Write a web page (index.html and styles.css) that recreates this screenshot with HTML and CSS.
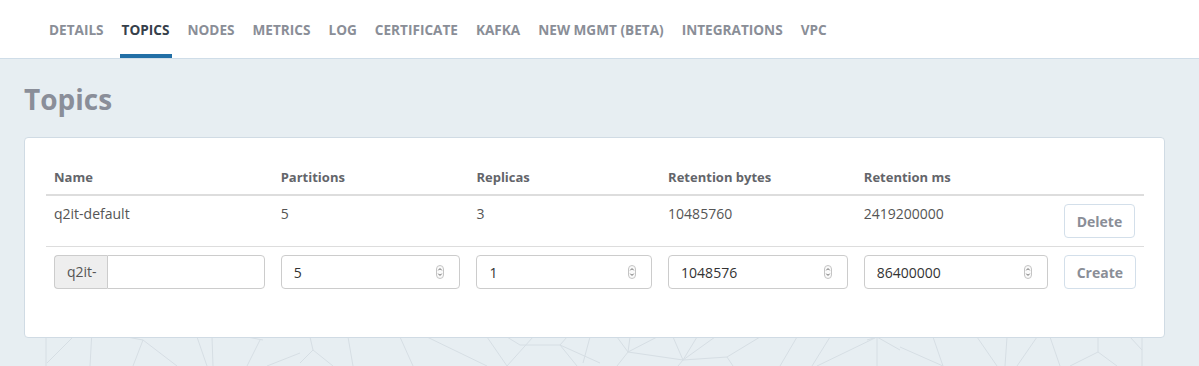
FILE: index.html
```html
<!DOCTYPE html>
<html lang="en">
<head>
    <meta charset="UTF-8">
    <meta name="viewport" content="width=device-width, initial-scale=1.0">
    <title>Topics</title>
    <link rel="stylesheet" href="styles.css">
</head>
<body>

    <!-- Tabs -->
    <nav class="tabs">
        <a href="#">DETAILS</a>
        <a href="#" class="active">TOPICS</a>
        <a href="#">NODES</a>
        <a href="#">METRICS</a>
        <a href="#">LOG</a>
        <a href="#">CERTIFICATE</a>
        <a href="#">KAFKA</a>
        <a href="#">NEW MGMT (BETA)</a>
        <a href="#">INTEGRATIONS</a>
        <a href="#">VPC</a>
    </nav>

    <div class="main">
        <!-- background mesh -->
        <svg class="mesh" width="1199" height="307" viewBox="0 59 1199 307" fill="none" stroke="#d6dee4" stroke-width="1">
            <line x1="46" y1="330" x2="46" y2="366"/>
            <line x1="47" y1="363" x2="73" y2="337"/>
            <line x1="92" y1="330" x2="90" y2="366"/>
            <line x1="143" y1="340" x2="133" y2="366"/>
            <line x1="143" y1="340" x2="177" y2="366"/>
            <line x1="127" y1="337" x2="143" y2="340"/>
            <line x1="197" y1="337" x2="207" y2="366"/>
            <line x1="212" y1="337" x2="213" y2="366"/>
            <line x1="260" y1="340" x2="247" y2="366"/>
            <line x1="247" y1="337" x2="263" y2="340"/>
            <line x1="300" y1="353" x2="267" y2="366"/>
            <line x1="310" y1="337" x2="313" y2="350"/>
            <line x1="313" y1="350" x2="300" y2="363"/>
            <line x1="313" y1="350" x2="333" y2="366"/>
            <line x1="348" y1="337" x2="353" y2="366"/>
            <line x1="400" y1="337" x2="413" y2="366"/>
            <line x1="427" y1="337" x2="487" y2="366"/>
            <line x1="487" y1="337" x2="507" y2="366"/>
            <line x1="533" y1="337" x2="507" y2="366"/>
            <line x1="507" y1="337" x2="520" y2="345"/>
            <line x1="520" y1="345" x2="560" y2="345"/>
            <line x1="560" y1="345" x2="567" y2="337"/>
            <line x1="560" y1="345" x2="600" y2="363"/>
            <line x1="560" y1="345" x2="577" y2="366"/>
            <line x1="590" y1="337" x2="583" y2="363"/>
            <line x1="617" y1="337" x2="628" y2="352"/>
            <line x1="630" y1="337" x2="628" y2="352"/>
            <line x1="628" y1="352" x2="683" y2="360"/>
            <line x1="628" y1="352" x2="657" y2="337"/>
            <line x1="628" y1="352" x2="617" y2="366"/>
            <line x1="673" y1="337" x2="683" y2="360"/>
            <line x1="697" y1="337" x2="683" y2="360"/>
            <line x1="683" y1="360" x2="715" y2="337"/>
            <line x1="683" y1="360" x2="727" y2="357"/>
            <line x1="727" y1="357" x2="760" y2="337"/>
            <line x1="727" y1="357" x2="733" y2="366"/>
            <line x1="683" y1="360" x2="678" y2="366"/>
            <line x1="797" y1="337" x2="780" y2="366"/>
            <line x1="830" y1="337" x2="812" y2="366"/>
            <line x1="867" y1="340" x2="877" y2="337"/>
            <line x1="877" y1="337" x2="877" y2="366"/>
            <line x1="877" y1="337" x2="900" y2="350"/>
            <line x1="877" y1="337" x2="817" y2="366"/>
            <line x1="900" y1="347" x2="943" y2="366"/>
            <line x1="933" y1="337" x2="943" y2="366"/>
            <line x1="977" y1="337" x2="997" y2="366"/>
            <line x1="1007" y1="337" x2="1005" y2="366"/>
            <line x1="1037" y1="337" x2="1017" y2="366"/>
            <line x1="1050" y1="337" x2="1060" y2="366"/>
            <line x1="1098" y1="337" x2="1098" y2="352"/>
            <line x1="1098" y1="352" x2="1070" y2="366"/>
            <line x1="1098" y1="352" x2="1117" y2="366"/>
            <line x1="1130" y1="337" x2="1142" y2="350"/>
            <line x1="1142" y1="330" x2="1142" y2="366"/>
        </svg>

        <h1>Topics</h1>

        <div class="card">
            <table class="topics">
                <thead>
                    <tr>
                        <th class="col-name">Name</th>
                        <th class="col-part">Partitions</th>
                        <th class="col-rep">Replicas</th>
                        <th class="col-bytes">Retention bytes</th>
                        <th class="col-ms">Retention ms</th>
                        <th></th>
                    </tr>
                </thead>
                <tbody>
                    <tr>
                        <td>q2it-default</td>
                        <td>5</td>
                        <td>3</td>
                        <td>10485760</td>
                        <td>2419200000</td>
                        <td><button class="btn">Delete</button></td>
                    </tr>
                    <tr>
                        <td>
                            <div class="input-group">
                                <span class="addon">q2it-</span>
                                <input type="text" class="field">
                            </div>
                        </td>
                        <td>
                            <div class="num">
                                <input type="number" class="field" value="5">
                                <svg class="spin" width="8" height="14" viewBox="0 0 8 14"><rect x="0.5" y="0.5" width="7" height="13" rx="3.5" fill="#fafafa" stroke="#c4c4c4"/><path d="M2.3 5.3 4 3.6 5.7 5.3M2.3 8.7 4 10.4 5.7 8.7" fill="none" stroke="#666" stroke-width="1"/></svg>
                            </div>
                        </td>
                        <td>
                            <div class="num">
                                <input type="number" class="field" value="1">
                                <svg class="spin" width="8" height="14" viewBox="0 0 8 14"><rect x="0.5" y="0.5" width="7" height="13" rx="3.5" fill="#fafafa" stroke="#c4c4c4"/><path d="M2.3 5.3 4 3.6 5.7 5.3M2.3 8.7 4 10.4 5.7 8.7" fill="none" stroke="#666" stroke-width="1"/></svg>
                            </div>
                        </td>
                        <td>
                            <div class="num">
                                <input type="number" class="field" value="1048576">
                                <svg class="spin" width="8" height="14" viewBox="0 0 8 14"><rect x="0.5" y="0.5" width="7" height="13" rx="3.5" fill="#fafafa" stroke="#c4c4c4"/><path d="M2.3 5.3 4 3.6 5.7 5.3M2.3 8.7 4 10.4 5.7 8.7" fill="none" stroke="#666" stroke-width="1"/></svg>
                            </div>
                        </td>
                        <td>
                            <div class="num">
                                <input type="number" class="field" value="86400000">
                                <svg class="spin" width="8" height="14" viewBox="0 0 8 14"><rect x="0.5" y="0.5" width="7" height="13" rx="3.5" fill="#fafafa" stroke="#c4c4c4"/><path d="M2.3 5.3 4 3.6 5.7 5.3M2.3 8.7 4 10.4 5.7 8.7" fill="none" stroke="#666" stroke-width="1"/></svg>
                            </div>
                        </td>
                        <td><button class="btn">Create</button></td>
                    </tr>
                </tbody>
            </table>
        </div>
    </div>

</body>
</html>
```

FILE: styles.css
```css
body {
    font-family: "Open Sans", sans-serif;
    margin: 0;
    background-color: #e7eef2;
    color: #555;
}

.tabs {
    display: flex;
    gap: 14px;
    height: 58px;
    padding-left: 47px;
    background-color: #ffffff;
    border-bottom: 1px solid #cfdde8;
    box-sizing: content-box;
}

.tabs a {
    display: flex;
    align-items: center;
    padding: 0 2px;
    border-bottom: 4px solid transparent;
    padding-top: 4px;
    font-size: 13.6px;
    font-weight: 700;
    color: #8a8e97;
    text-decoration: none;
}

.tabs a.active {
    color: #36404a;
    border-bottom-color: #226fa6;
}

.main {
    position: relative;
    padding: 24px 34px 29px 24px;
}

.mesh {
    position: absolute;
    left: 0;
    top: 0;
}

h1 {
    position: relative;
    margin: 0 0 22px;
    font-size: 28px;
    line-height: 32px;
    font-weight: 700;
    color: #8a8e99;
}

.card {
    position: relative;
    background-color: #ffffff;
    border: 1px solid #d0dbe4;
    border-radius: 4px;
    padding: 20px 20px 20px 21px;
}

.topics {
    width: 100%;
    border-collapse: collapse;
    margin-bottom: 20px;
    font-size: 14px;
}

.topics th,
.topics td {
    text-align: left;
    vertical-align: top;
    padding: 8px;
    line-height: 20px;
}

.topics th {
    font-size: 13px;
    font-weight: 700;
    color: #63656a;
    border-bottom: 2px solid #dddddd;
    padding-top: 9px;
    padding-bottom: 7px;
}

.topics tbody tr + tr td {
    border-top: 1px solid #dddddd;
}

.col-name { width: 211px; }
.col-part { width: 180px; }
.col-rep { width: 176px; }
.col-bytes { width: 180px; }
.col-ms { width: 184px; }

.btn {
    font-family: "Open Sans", sans-serif;
    font-size: 14px;
    font-weight: 700;
    color: #8a8e97;
    background-color: #ffffff;
    border: 1px solid #d3dfea;
    border-radius: 4px;
    height: 34px;
    padding: 0 12px;
    cursor: pointer;
}

.field {
    font-family: "Open Sans", sans-serif;
    font-size: 14px;
    color: #333;
    width: 100%;
    height: 34px;
    box-sizing: border-box;
    padding: 0 12px;
    border: 1px solid #cccccc;
    border-radius: 4px;
    background-color: #ffffff;
    -moz-appearance: textfield;
}

.field::-webkit-inner-spin-button,
.field::-webkit-outer-spin-button {
    -webkit-appearance: none;
    margin: 0;
}

.input-group {
    display: flex;
}

.input-group .addon {
    display: flex;
    align-items: center;
    padding: 0 12px;
    width: 53px;
    box-sizing: border-box;
    background-color: #eeeeee;
    border: 1px solid #cccccc;
    border-right: none;
    border-radius: 4px 0 0 4px;
    color: #555;
}

.input-group .field {
    flex: 1;
    border-radius: 0 4px 4px 0;
}

.num {
    position: relative;
}

.spin {
    position: absolute;
    right: 16px;
    top: 10px;
}
```
